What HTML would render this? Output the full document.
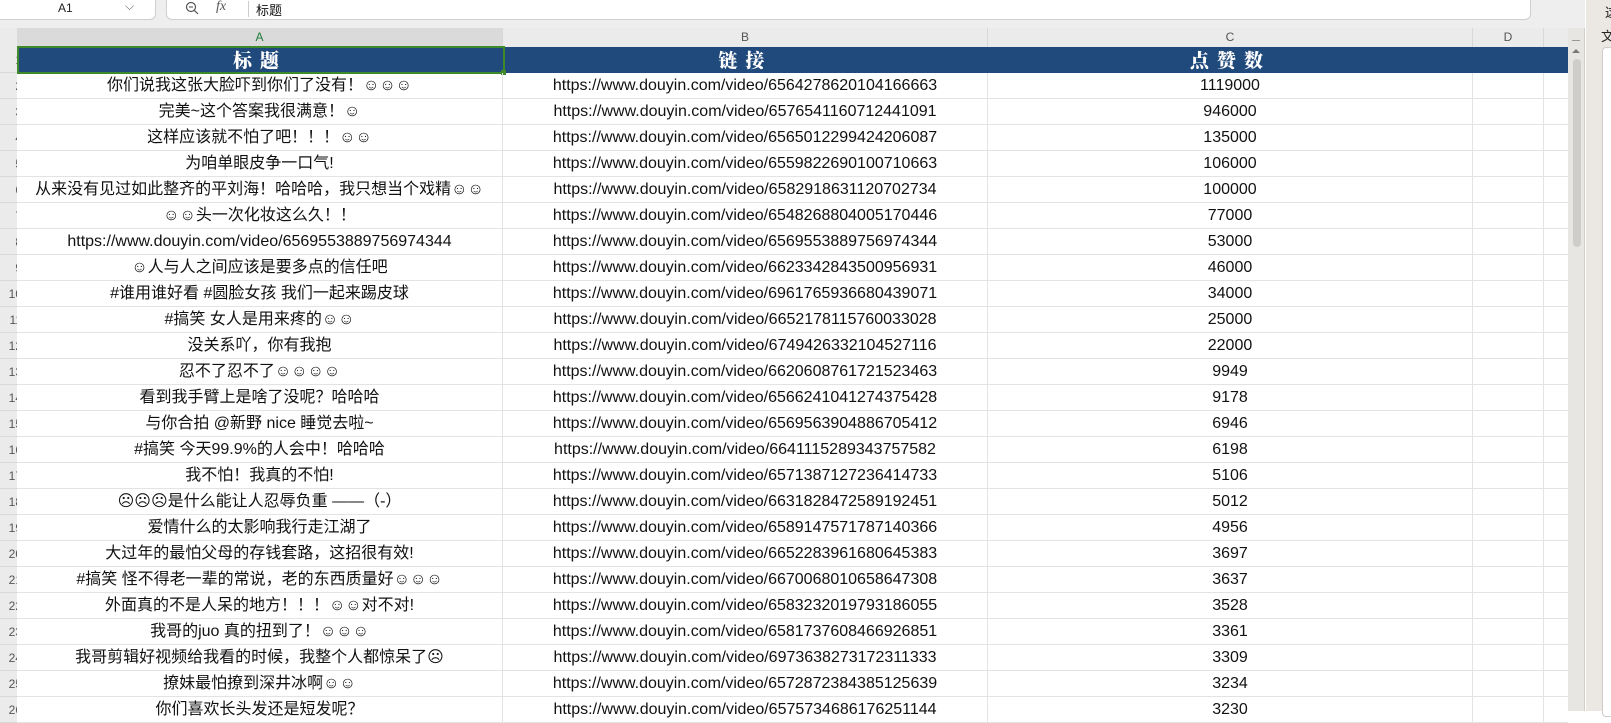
<!DOCTYPE html>
<html><head><meta charset="utf-8"><style>
*{margin:0;padding:0;box-sizing:border-box}
body{width:1611px;height:711px;overflow:hidden;background:#fff;font-family:"Liberation Sans","Noto Sans CJK SC",sans-serif;position:relative}
.top{position:absolute;left:0;top:0;width:1585px;height:28px;background:#eeeeee}
.nb{position:absolute;left:-10px;top:-10px;width:166px;height:30px;background:#fff;border:1px solid #cfcfcf;border-radius:6px}
.fb{position:absolute;left:166px;top:-10px;width:1365px;height:30px;background:#fff;border:1px solid #cfcfcf;border-radius:6px}
.colh{position:absolute;top:28px;height:19px;background:#ebebeb;border-right:1px solid #d8d8d8;font-size:12px;color:#555;text-align:center;line-height:19px}
.rn{position:absolute;left:0;width:17px;background:#ebebeb;border-bottom:1px solid #d8d8d8;font-size:12px;color:#555;line-height:26px;text-align:right;overflow:hidden}
.rn span{position:relative;left:5px}
.row{position:absolute;left:17px;width:1551px;height:26px;border-bottom:1px solid #e3e3e3;font-size:16px;color:#111;line-height:25px;white-space:nowrap}
.c{position:absolute;top:0;height:26px;text-align:center;border-right:1px solid #e3e3e3;overflow:hidden}
.a{left:0;width:486px}.b{left:486px;width:485px}.cc{left:971px;width:485px}.d{left:1456px;width:71px}.e{left:1527px;width:24px;border-right:none}
.hdr{position:absolute;left:17px;top:47px;width:1551px;height:26px;background:#214a7c;color:#fff;font-family:"Noto Serif CJK SC",serif;font-weight:900;font-size:19px;line-height:26px}
.hdr div{position:absolute;top:0;text-align:center;letter-spacing:8px}
</style></head><body>
<div class="top"></div>
<div class="nb"><span style="position:absolute;left:67px;top:10px;font-size:12px;color:#222">A1</span><span style="position:absolute;left:134px;top:8px;font-size:12px;color:#666">⌵</span></div>
<div class="fb">
<svg style="position:absolute;left:18px;top:10px" width="14" height="14" viewBox="0 0 14 14"><circle cx="6" cy="6" r="4.5" fill="none" stroke="#555" stroke-width="1.2"/><line x1="9.3" y1="9.3" x2="13" y2="13" stroke="#555" stroke-width="1.2"/><line x1="4" y1="6" x2="8" y2="6" stroke="#555" stroke-width="1.1"/></svg>
<span style="position:absolute;left:49px;top:8px;font-family:'Liberation Serif',serif;font-style:italic;font-size:14px;color:#555">fx</span>
<div style="position:absolute;left:81px;top:10px;width:1px;height:16px;background:#ccc"></div>
<span style="position:absolute;left:89px;top:9px;font-size:13px;color:#111">标题</span>
</div>
<div style="position:absolute;left:0;top:28px;width:17px;height:19px;background:#ebebeb"></div>
<div class="colh" style="left:17px;width:486px;background:#dadada;color:#1d7b3a">A</div>
<div class="colh" style="left:503px;width:485px">B</div>
<div class="colh" style="left:988px;width:485px">C</div>
<div class="colh" style="left:1473px;width:71px">D</div>
<div class="colh" style="left:1544px;width:24px;border-right:none"></div>
<div class="hdr"><div style="left:0;width:486px">标题</div><div style="left:486px;width:485px">链接</div><div style="left:971px;width:485px">点赞数</div></div>
<div style="position:absolute;left:17px;top:46px;width:488px;height:28px;border:2px solid #3e8a2a"></div>
<div style="position:absolute;left:501px;top:70px;width:5px;height:5px;background:#3e8a2a"></div>
<div class="rn" style="top:47px;height:26px"><span>1</span></div>
<div id="rows"></div>
<div style="position:absolute;left:1568px;top:28px;width:17px;height:683px;background:#e8e6e2;border-right:1px solid #d0cec9"></div>
<div style="position:absolute;left:1572px;top:40px;width:8px;height:1px;background:#999"></div>
<div style="position:absolute;left:1572px;top:49px;width:0;height:0;border-left:4px solid transparent;border-right:4px solid transparent;border-bottom:4px solid #777"></div>
<div style="position:absolute;left:1573px;top:59px;width:8px;height:188px;background:#cfcdc9;border-radius:4px"></div>
<div style="position:absolute;left:1586px;top:0;width:25px;height:711px;background:#ebe8e4"></div>
<div style="position:absolute;left:1602px;top:47px;width:12px;height:670px;background:#fff;border:1px solid #ccc;border-radius:4px"></div>
<span style="position:absolute;left:1605px;top:2px;font-size:13px;color:#222">这</span>
<span style="position:absolute;left:1601px;top:26px;font-size:13px;color:#222">文</span>
<script>
var d=[["你们说我这张大脸吓到你们了没有！☺☺☺","6564278620104166663","1119000"],
["完美~这个答案我很满意！☺","6576541160712441091","946000"],
["这样应该就不怕了吧！！！☺☺","6565012299424206087","135000"],
["为咱单眼皮争一口气!","6559822690100710663","106000"],
["从来没有见过如此整齐的平刘海！哈哈哈，我只想当个戏精☺☺","6582918631120702734","100000"],
["☺☺头一次化妆这么久！！","6548268804005170446","77000"],
["https://www.douyin.com/video/6569553889756974344","6569553889756974344","53000"],
["☺人与人之间应该是要多点的信任吧","6623342843500956931","46000"],
["#谁用谁好看 #圆脸女孩 我们一起来踢皮球","6961765936680439071","34000"],
["#搞笑 女人是用来疼的☺☺","6652178115760033028","25000"],
["没关系吖，你有我抱","6749426332104527116","22000"],
["忍不了忍不了☺☺☺☺","6620608761721523463","9949"],
["看到我手臂上是啥了没呢？哈哈哈","6566241041274375428","9178"],
["与你合拍 @新野 nice 睡觉去啦~","6569563904886705412","6946"],
["#搞笑 今天99.9%的人会中！哈哈哈","6641115289343757582","6198"],
["我不怕！我真的不怕!","6571387127236414733","5106"],
["☹☹☹是什么能让人忍辱负重 ——（-）","6631828472589192451","5012"],
["爱情什么的太影响我行走江湖了","6589147571787140366","4956"],
["大过年的最怕父母的存钱套路，这招很有效!","6652283961680645383","3697"],
["#搞笑 怪不得老一辈的常说，老的东西质量好☺☺☺","6670068010658647308","3637"],
["外面真的不是人呆的地方！！！☺☺对不对!","6583232019793186055","3528"],
["我哥的juo 真的扭到了！☺☺☺","6581737608466926851","3361"],
["我哥剪辑好视频给我看的时候，我整个人都惊呆了☹","6973638273172311333","3309"],
["撩妹最怕撩到深井冰啊☺☺","6572872384385125639","3234"],
["你们喜欢长头发还是短发呢？","6575734686176251144","3230"]];
var h="";
for(var i=0;i<d.length;i++){var t=73+i*26;
h+='<div class="rn" style="top:'+t+'px;height:26px"><span>'+(i+2)+'</span></div>';
h+='<div class="row" style="top:'+t+'px"><div class="c a">'+d[i][0]+'</div><div class="c b">https://www.douyin.com/video/'+d[i][1]+'</div><div class="c cc">'+d[i][2]+'</div><div class="c d"></div><div class="c e"></div></div>';}
document.getElementById("rows").innerHTML=h;
</script>
</body></html>
